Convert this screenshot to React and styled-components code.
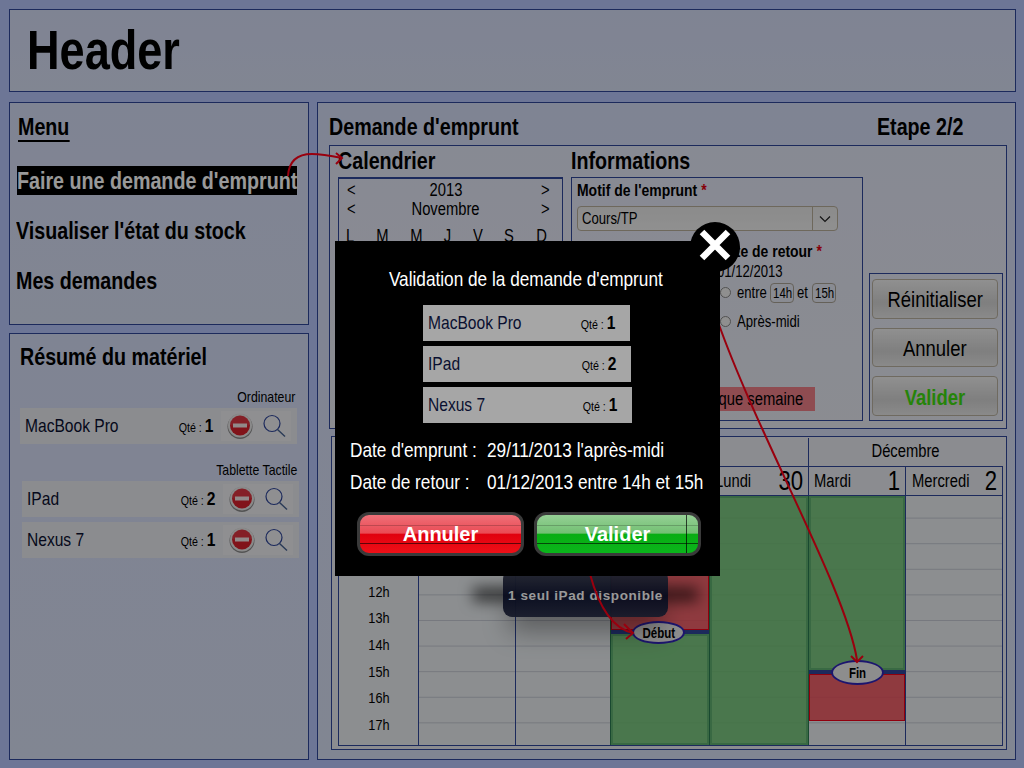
import styled, { createGlobalStyle, css } from 'styled-components';

const SANS = `"Liberation Sans", Arial, sans-serif`;
const LINE = '#2f4699';

// no narrow family on the machine, so the text gets squeezed
const narrow = css`
    display: inline-block;
    white-space: nowrap;
    transform: scaleX(0.82);
    transform-origin: ${(p) => p.$origin || 'left'} center;
`

const GlobalStyle = createGlobalStyle`
    html, body {
        margin: 0;
        padding: 0;
        background: #b6c5fa;
    }
    * {
        box-sizing: border-box;
    }
`

const summaryGroups = [
    { label: 'Ordinateur', indent: 0, items: [{ name: 'MacBook Pro', qty: 1 }] },
    { label: 'Tablette Tactile', indent: 2, items: [{ name: 'IPad', qty: 2 }, { name: 'Nexus 7', qty: 1 }] },
];
const modalItems = [
    { name: 'MacBook Pro', qty: 1, width: 207 },
    { name: 'IPad', qty: 2, width: 208 },
    { name: 'Nexus 7', qty: 1, width: 209 },
];
// the first hours and days sit behind the modal
const hours = ['', '', '', '12h', '13h', '14h', '15h', '16h', '17h'];
const days = [
    { id: 'a' },
    { id: 'b' },
    { id: 'c' },
    { id: 'd', name: 'Lundi', num: 30 },
    { id: 'e', name: 'Mardi', num: 1 },
    { id: 'f', name: 'Mercredi', num: 2 },
];

function MinusIcon() {
    return (
        <svg width="26" height="26" viewBox="0 0 26 26">
            <circle cx="13" cy="13.5" r="12.5" fill="#8a8a8a" />
            <circle cx="13" cy="12.5" r="12" fill="#e6e6e6" />
            <circle cx="13" cy="12.5" r="10" fill="#d8202c" />
            <path d="M3 12.5a10 10 0 0 1 20 0z" fill="#fff" opacity="0.1" />
            <rect x="6" y="10.5" width="14" height="4" fill="#f2e6e6" />
        </svg>
    );
}

function SearchIcon() {
    return (
        <svg width="24" height="24" viewBox="0 0 24 24" fill="none" stroke={LINE} strokeWidth="1.2">
            <circle cx="10" cy="9.5" r="8" />
            <path d="M15.5 15.5L23 22.5" stroke="#44608f" strokeWidth="1.4" />
        </svg>
    );
}

function Arrows() {
    return (
        <ArrowLayer width="1024" height="768" viewBox="0 0 1024 768" fill="none" stroke="#ff0018" strokeWidth="2">
            <path d="M288 176C289 160 298 154 312 154C322 154 332 156 342 158" />
            <path d="M336 153L342 158L336 164" />
            <path d="M590 574C597 600 610 628 633 633" />
            <path d="M624 624L633 633L626 639" />
            <path d="M718 322C760 440 846 590 857 660" />
            <path d="M851 656L857 662L863 656" />
        </ArrowLayer>
    );
}

export default function App() {
    return (
        <Page>
            <GlobalStyle />
            <HeaderBar><HeaderText>Header</HeaderText></HeaderBar>
            <Columns>
                <LeftColumn>
                    <MenuPanel>
                        <MenuTitle>Menu</MenuTitle>
                        <MenuItem $active><MenuText>Faire une demande d'emprunt</MenuText></MenuItem>
                        <MenuItem><MenuText>Visualiser l'état du stock</MenuText></MenuItem>
                        <MenuItem><MenuText>Mes demandes</MenuText></MenuItem>
                    </MenuPanel>
                    <SummaryPanel>
                        <SummaryTitle>Résumé du matériel</SummaryTitle>
                        {summaryGroups.map((g) => (
                            <SummaryGroup key={g.label} $indent={g.indent}>
                                <GroupLabel $origin="right">{g.label}</GroupLabel>
                                {g.items.map((item) => (
                                    <SummaryRow key={item.name}>
                                        <ItemName>{item.name}</ItemName>
                                        <Qty $origin="right">Qté : <b>{item.qty}</b></Qty>
                                        <RowTools>
                                            <MinusIcon />
                                            <SearchIcon />
                                        </RowTools>
                                    </SummaryRow>
                                ))}
                            </SummaryGroup>
                        ))}
                    </SummaryPanel>
                </LeftColumn>

                <MainPanel>
                    <MainTitle>
                        <TitleText>Demande d'emprunt</TitleText>
                        <TitleText $origin="right">Etape 2/2</TitleText>
                    </MainTitle>
                    <FormBox>
                        <CalendarSide>
                            <SectionTitle>Calendrier</SectionTitle>
                            <MiniCalendar>
                                <MiniNav>
                                    <MiniText>&lt;</MiniText>
                                    <MiniLabel $origin="center">2013</MiniLabel>
                                    <MiniText $origin="right">&gt;</MiniText>
                                </MiniNav>
                                <MiniNav>
                                    <MiniText>&lt;</MiniText>
                                    <MiniLabel $origin="center">Novembre</MiniLabel>
                                    <MiniText $origin="right">&gt;</MiniText>
                                </MiniNav>
                                <MiniDays>
                                    {['L', 'M', 'M', 'J', 'V', 'S', 'D'].map((d, i) => <MiniText key={i} $origin="center">{d}</MiniText>)}
                                </MiniDays>
                            </MiniCalendar>
                        </CalendarSide>
                        <InfoSide>
                            <SectionTitle>Informations</SectionTitle>
                            <InfoBox>
                                <FieldLabel>Motif de l'emprunt <Star>*</Star></FieldLabel>
                                <SelectBox>
                                    <SmallText>Cours/TP</SmallText>
                                    <SelectArrow>
                                        <svg width="12" height="8" viewBox="0 0 12 8" fill="none" stroke="#222" strokeWidth="1.2">
                                            <path d="M1 1.5L6 6.5L11 1.5" />
                                        </svg>
                                    </SelectArrow>
                                </SelectBox>
                                <ReturnField>
                                    <ReturnLabel>Date de retour <Star>*</Star></ReturnLabel>
                                    <DateValue>01/12/2013</DateValue>
                                    <RadioRow>
                                        <Radio />
                                        <RadioText $trim={-3}>entre</RadioText>
                                        <HourInput><HourText $origin="center">14h</HourText></HourInput>
                                        <RadioText $lead={3} $trim={1}>et</RadioText>
                                        <HourInput><HourText $origin="center">15h</HourText></HourInput>
                                    </RadioRow>
                                    <RadioRow>
                                        <Radio />
                                        <RadioText>Après-midi</RadioText>
                                    </RadioRow>
                                </ReturnField>
                                <WeekBar><WeekText $origin="right">Chaque semaine</WeekText></WeekBar>
                            </InfoBox>
                        </InfoSide>
                        <ActionBox>
                            <ActionButton><ActionText $origin="center">Réinitialiser</ActionText></ActionButton>
                            <ActionButton><ActionText $origin="center">Annuler</ActionText></ActionButton>
                            <ActionButton $green><ActionText $origin="center">Valider</ActionText></ActionButton>
                        </ActionBox>
                    </FormBox>

                    <PlanningBox>
                        <Planning>
                            <MonthCell $from={2} $to={6} />
                            <MonthCell $from={6} $to={8}><MiniText $origin="center">Décembre</MiniText></MonthCell>
                            <DayHead $blank />
                            {days.map((d) => (
                                <DayHead key={d.id}>
                                    {d.name && <DayName>{d.name}</DayName>}
                                    {d.name && <DayNum $origin="right">{d.num}</DayNum>}
                                </DayHead>
                            ))}
                            <HoursCol>
                                {hours.map((h, i) => <HourLabel key={i}><HourName $origin="center">{h}</HourName></HourLabel>)}
                            </HoursCol>
                            <DayCol />
                            <DayCol />
                            <DayCol $edge>
                                <Slot $kind="red" $height={134} />
                                <NavyBar />
                                <Slot $kind="green" $grow />
                                <SlotBadge $top={125} $left={21} $height={23}><BadgeText $origin="center">Début</BadgeText></SlotBadge>
                            </DayCol>
                            <DayCol $edge>
                                <Slot $kind="green" $grow />
                            </DayCol>
                            <DayCol $edge>
                                <Slot $kind="green" $height={174} />
                                <NavyBar />
                                <Slot $kind="red" $height={47} />
                                <SlotBadge $top={164} $left={22} $height={25}><BadgeText $origin="center">Fin</BadgeText></SlotBadge>
                            </DayCol>
                            <DayCol />
                        </Planning>
                    </PlanningBox>
                </MainPanel>
            </Columns>

            <Tooltip>1 seul iPad disponible</Tooltip>
            <Arrows />
            <Dim />

            <Modal>
                <CloseButton>
                    <svg width="34" height="34" viewBox="0 0 34 34" stroke="#fff" strokeWidth="6.5">
                        <path d="M4 4L30 30M30 4L4 30" />
                    </svg>
                </CloseButton>
                <ModalTitle $origin="center">Validation de la demande d'emprunt</ModalTitle>
                <ModalList>
                    {modalItems.map((item) => (
                        <ModalRow key={item.name} $width={item.width}>
                            <ItemName>{item.name}</ItemName>
                            <Qty $origin="right">Qté : <b>{item.qty}</b></Qty>
                        </ModalRow>
                    ))}
                </ModalList>
                <DateLines>
                    <DateText>Date d'emprunt :</DateText>
                    <DateText>29/11/2013 l'après-midi</DateText>
                    <DateText>Date de retour :</DateText>
                    <DateText>01/12/2013 entre 14h et 15h</DateText>
                </DateLines>
                <ModalButtons>
                    <GlossButton>Annuler</GlossButton>
                    <GlossButton $green>Valider</GlossButton>
                </ModalButtons>
            </Modal>
        </Page>
    );
}

const Page = styled.div`
    position: relative;
    width: 1024px;
    height: 768px;
    overflow: hidden;
    padding: 9px 8px 8px 9px;
    display: flex;
    flex-direction: column;
    gap: 10px;
    font-family: ${SANS};
    color: #000;
    background: #b6c5fa;
`

const Panel = styled.div`
    border: 1px solid ${LINE};
    background: linear-gradient(to bottom, #d4dcf6, #d8dff4);
`

const HeaderBar = styled(Panel)`
    height: 83px;
    padding: 0 17px;
`

const HeaderText = styled.div`
    ${narrow}
    font-size: 55px;
    font-weight: 700;
    line-height: 80px;
`

const Columns = styled.div`
    flex: 1;
    display: grid;
    grid-template-columns: 300px 699px;
    gap: 8px;
    min-height: 0;
`

const LeftColumn = styled.div`
    display: flex;
    flex-direction: column;
    gap: 8px;
`

const MenuPanel = styled(Panel)`
    height: 223px;
    padding: 11px 0 0 6px;
`

const MenuTitle = styled.div`
    ${narrow}
    margin-left: 2px;
    font-size: 24px;
    font-weight: 700;
    line-height: 26px;
    border-bottom: 2px solid #000;
`

const MenuItem = styled.div`
    width: 280px;
    height: 29px;
    margin: ${(p) => (p.$active ? '24px 0 0 1px' : '21px 0 0 0')};
    background: ${(p) => (p.$active ? '#000' : 'transparent')};
    color: ${(p) => (p.$active ? '#fff' : '#000')};
`

const MenuText = styled.span`
    ${narrow}
    font-size: 24px;
    font-weight: 700;
    line-height: 29px;
`

const SummaryPanel = styled(Panel)`
    flex: 1;
    padding: 9px 10px 0 10px;
`

const SummaryTitle = styled.div`
    ${narrow}
    display: block;
    font-size: 24px;
    font-weight: 700;
    line-height: 28px;
    margin-bottom: 17px;
`

const SummaryGroup = styled.div`
    margin: 0 0 17px ${(p) => p.$indent}px;
    width: 277px;
    display: flex;
    flex-direction: column;
    gap: 5px;
`

const GroupLabel = styled.div`
    ${narrow}
    display: block;
    padding-right: 2px;
    font-size: 15px;
    line-height: 18px;
    text-align: right;
    margin-bottom: -3px;
`

const SummaryRow = styled.div`
    height: 36px;
    display: flex;
    align-items: center;
    padding: 0 6px 0 5px;
    background: #e8e9ee;
`

const ItemName = styled.div`
    ${narrow}
    flex: 1;
    font-size: 19px;
    color: #0a1030;
`

const Qty = styled.div`
    ${narrow}
    font-size: 13px;
    b {
        font-size: 19px;
    }
`

const RowTools = styled.div`
    width: 70px;
    height: 30px;
    margin-left: 8px;
    display: flex;
    align-items: center;
    justify-content: space-between;
    padding: 0 5px 0 6px;
    background: #eeeef2;
`

const MainPanel = styled(Panel)`
    padding: 10px 8px 9px 11px;
    display: flex;
    flex-direction: column;
`

const MainTitle = styled.div`
    height: 32px;
    display: flex;
    justify-content: space-between;
    padding-right: 44px;
`

const TitleText = styled.span`
    ${narrow}
    font-size: 24px;
    font-weight: 700;
    line-height: 28px;
`

const FormBox = styled.div`
    height: 284px;
    border: 1px solid ${LINE};
    display: flex;
    padding: 0 2px 7px 8px;
    background: linear-gradient(to bottom, #e2e6f6, #e8eaf2);
`

const CalendarSide = styled.div`
    width: 233px;
    display: flex;
    flex-direction: column;
`

const SectionTitle = styled.div`
    ${narrow}
    display: block;
    margin-bottom: 1px;
    font-size: 24px;
    font-weight: 700;
    line-height: 30px;
`

const MiniCalendar = styled.div`
    width: 225px;
    flex: 1;
    border: 1px solid ${LINE};
    border-top-width: 2px;
    padding: 1px 0 0 8px;
`

const MiniText = styled.span`
    ${narrow}
    font-size: 18px;
    line-height: 20px;
`

const MiniLabel = styled(MiniText)`
    margin-right: 5px;
`

const MiniNav = styled.div`
    width: 203px;
    height: 19px;
    display: flex;
    justify-content: space-between;
`

const MiniDays = styled.div`
    width: 203px;
    margin: 8px 0 0 -2px;
    display: flex;
    justify-content: space-between;
`

const InfoSide = styled.div`
    width: 292px;
    display: flex;
    flex-direction: column;
`

const InfoBox = styled.div`
    position: relative;
    flex: 1;
    border: 1px solid ${LINE};
    padding: 3px 5px 0 5px;
    display: flex;
    flex-direction: column;
`

const FieldLabel = styled.div`
    ${narrow}
    display: block;
    font-size: 17px;
    font-weight: 700;
    line-height: 20px;
`

const ReturnLabel = styled(FieldLabel)`
    margin-left: 8px;
`

const Star = styled.span`
    color: #e00010;
`

const SelectBox = styled.div`
    width: 261px;
    height: 25px;
    margin-top: 5px;
    display: flex;
    align-items: center;
    justify-content: space-between;
    padding-left: 4px;
    border: 1px solid #b8ad9a;
    border-radius: 4px;
    background: linear-gradient(to bottom, #e8e8e8, #f0f0f0);
`

const SmallText = styled.span`
    ${narrow}
    font-size: 16px;
`

const SelectArrow = styled.div`
    width: 25px;
    height: 100%;
    display: flex;
    align-items: center;
    justify-content: center;
    border-left: 1px solid #b8ad9a;
`

const ReturnField = styled.div`
    margin: 11px 0 0 133px;
    display: flex;
    flex-direction: column;
`

const DateValue = styled.div`
    ${narrow}
    margin: 0 0 -4px 7px;
    font-size: 16px;
    line-height: 20px;
`

const RadioRow = styled.div`
    height: 29px;
    padding-left: 10px;
    display: flex;
    align-items: center;
`

const RadioText = styled.span`
    ${narrow}
    font-size: 16px;
    margin: 0 ${(p) => p.$trim ?? 0}px 0 ${(p) => p.$lead ?? 0}px;
`

const Radio = styled.span`
    width: 11px;
    height: 11px;
    margin-right: 6px;
    border-radius: 50%;
    border: 1px solid #888;
    background: #eee;
`

const HourInput = styled.span`
    width: 24px;
    height: 20px;
    flex: none;
    line-height: 18px;
    text-align: center;
    border: 1px solid #a9a294;
    border-radius: 4px;
`

const HourText = styled.span`
    ${narrow}
    font-size: 14px;
`

const WeekBar = styled.div`
    position: absolute;
    right: 47px;
    top: 209px;
    width: 240px;
    height: 24px;
    padding-right: 12px;
    text-align: right;
    line-height: 24px;
    background: #ef7f88;
`

const WeekText = styled.span`
    ${narrow}
    font-size: 18px;
`

const ActionBox = styled.div`
    width: 134px;
    height: 148px;
    margin: auto 0 0 6px;
    border: 1px solid ${LINE};
    padding: 5px 4px 4px 2px;
    display: flex;
    flex-direction: column;
    gap: 9px;
`

const ActionButton = styled.div`
    flex: 1;
    padding-top: 3px;
    font-weight: ${(p) => (p.$green ? 700 : 400)};
    color: ${(p) => (p.$green ? '#3fdc10' : '#000')};
    display: flex;
    align-items: center;
    justify-content: center;
    border: 1px solid #b9b1a1;
    border-radius: 4px;
    background: linear-gradient(to bottom, #f0f0f0, #d4d4d4 60%, #e6e6e6);
`

const ActionText = styled.span`
    ${narrow}
    font-size: 22.5px;
`

const PlanningBox = styled.div`
    flex: 1;
    margin: 7px 0 0 2px;
    padding: 1px 3px 3px 6px;
    border: 1px solid ${LINE};
    background: #e8eaf0;
`

const Planning = styled.div`
    position: relative;
    height: 100%;
    display: grid;
    grid-template-columns: 80px 97px 95px 99px 99px 97px 1fr;
    grid-template-rows: 28px 30px 1fr;
    border-bottom: 1px solid ${LINE};
`

const MonthCell = styled.div`
    grid-column: ${(p) => p.$from} / ${(p) => p.$to};
    border-left: 1px solid ${LINE};
    text-align: center;
    line-height: 28px;
`

const DayHead = styled.div`
    grid-column: ${(p) => (p.$blank ? '1' : 'auto')};
    min-width: 0;
    display: flex;
    align-items: center;
    justify-content: space-between;
    padding: 1px 5px 0 5px;
    border-top: 1px solid ${LINE};
    border-bottom: 1px solid ${LINE};
    border-left: 1px solid ${LINE};
    &:nth-child(9) {
        border-right: 1px solid ${LINE};
        padding-left: 6px;
    }
`

const DayName = styled.span`
    ${narrow}
    font-size: 18px;
`

const DayNum = styled.span`
    ${narrow}
    font-size: 27px;
`

const HoursCol = styled.div`
    padding-top: 3px;
    display: flex;
    flex-direction: column;
    border-left: 1px solid ${LINE};
    background: #e9edf0;
`

const HourLabel = styled.div`
    height: 26.6px;
    line-height: 26px;
    text-align: center;
`

const HourName = styled.span`
    ${narrow}
    font-size: 15.5px;
`

const DayCol = styled.div`
    position: relative;
    display: flex;
    flex-direction: column;
    border-left: 1px solid ${(p) => (p.$edge ? '#2a7a50' : LINE)};
    background-color: #e9edf0;
    background-image: linear-gradient(to bottom, transparent 24.6px, #c5c9d3 24.6px);
    background-size: 100% 25.6px;
    background-position: 0 -3px;
    &:last-child {
        border-left-color: ${LINE};
        border-right: 1px solid ${LINE};
    }
`

const Slot = styled.div`
    height: ${(p) => (p.$height ? `${p.$height}px` : 'auto')};
    flex: ${(p) => (p.$grow ? 1 : 'none')};
    border: ${(p) => (p.$kind === 'red' ? '1.5px solid #f00018' : '2px solid #5fb070')};
    background: ${(p) => (p.$kind === 'red' ? 'rgba(239, 73, 82, 0.85)' : 'rgba(104, 191, 108, 0.85)')};
`

const NavyBar = styled.div`
    height: 4px;
    flex: none;
    background: #2f4699;
`

const SlotBadge = styled.div`
    position: absolute;
    top: ${(p) => p.$top}px;
    left: ${(p) => p.$left}px;
    width: 53px;
    height: ${(p) => p.$height}px;
    border: 2px solid #3024b8;
    border-radius: 50%;
    background: #ececec;
    line-height: ${(p) => p.$height - 4}px;
    text-align: center;
`

const BadgeText = styled.span`
    ${narrow}
    font-size: 14px;
    font-weight: 700;
`

const Tooltip = styled.div`
    position: absolute;
    left: 503px;
    top: 570px;
    width: 165px;
    height: 47px;
    padding-top: 18px;
    border-radius: 9px;
    text-align: center;
    font-size: 13.5px;
    font-weight: 700;
    letter-spacing: 0.6px;
    white-space: nowrap;
    color: #fff;
    background: linear-gradient(to bottom, rgba(62, 66, 84, 0.97), rgba(14, 20, 50, 0.97) 55%, rgba(40, 46, 72, 0.97));
    box-shadow:
        -46px 1px 14px -16px rgba(0, 0, 0, 0.6),
        46px 1px 14px -16px rgba(0, 0, 0, 0.6),
        0 20px 26px -6px rgba(0, 0, 0, 0.35);
`

const ArrowLayer = styled.svg`
    position: absolute;
    left: 0;
    top: 0;
`

const Dim = styled.div`
    position: absolute;
    inset: 0;
    background: rgba(0, 0, 0, 0.4);
`

const Modal = styled.div`
    position: absolute;
    left: 335px;
    top: 241px;
    width: 385px;
    height: 335px;
    padding-top: 26px;
    display: flex;
    flex-direction: column;
    background: #000;
    color: #fff;
`

const CloseButton = styled.div`
    position: absolute;
    left: 355px;
    top: -19px;
    width: 50px;
    height: 50px;
    padding-bottom: 4px;
    border-radius: 50%;
    display: flex;
    align-items: center;
    justify-content: center;
    background: #000;
`

const ModalTitle = styled.div`
    ${narrow}
    display: block;
    height: 24px;
    padding-right: 4px;
    text-align: center;
    font-size: 21px;
    line-height: 24px;
`

const ModalList = styled.div`
    margin: 14px 0 0 88px;
    display: flex;
    flex-direction: column;
    gap: 5px;
    color: #000;
`

const ModalRow = styled.div`
    width: ${(p) => p.$width}px;
    height: 36px;
    padding: 0 15px 0 5px;
    display: flex;
    align-items: center;
    background: #a6a6a6;
`

const DateLines = styled.div`
    margin: 15px 0 0 15px;
    display: grid;
    grid-template-columns: 137px 1fr;
    row-gap: 8px;
`

const DateText = styled.span`
    ${narrow}
    font-size: 21px;
    line-height: 24px;
`

const ModalButtons = styled.div`
    margin: 18px 0 0 22px;
    display: flex;
    gap: 10px;
`

const GlossButton = styled.div`
    width: 167px;
    height: 44px;
    border: 3px solid #3a3a3a;
    border-radius: 12px;
    text-align: center;
    font-size: 20px;
    font-weight: 700;
    line-height: 38px;
    color: #fff;
    background:
        linear-gradient(to bottom, transparent 10px, rgba(0, 0, 0, 0.2) 10px, rgba(0, 0, 0, 0.2) 11px, transparent 11px, transparent 28px, rgba(0, 0, 0, 0.6) 28px, rgba(0, 0, 0, 0.6) 29px, transparent 29px),
        ${(p) =>
            p.$green
                ? 'linear-gradient(to right, transparent 149px, rgba(0, 0, 0, 0.7) 149px, rgba(0, 0, 0, 0.7) 150px, transparent 150px), linear-gradient(to bottom, #95cf95, #72c072 48%, #08ad12 50%, #0bb51c)'
                : 'linear-gradient(to bottom, #ee7078, #ea4a54 48%, #e0000e 50%, #ee1018)'};
`
